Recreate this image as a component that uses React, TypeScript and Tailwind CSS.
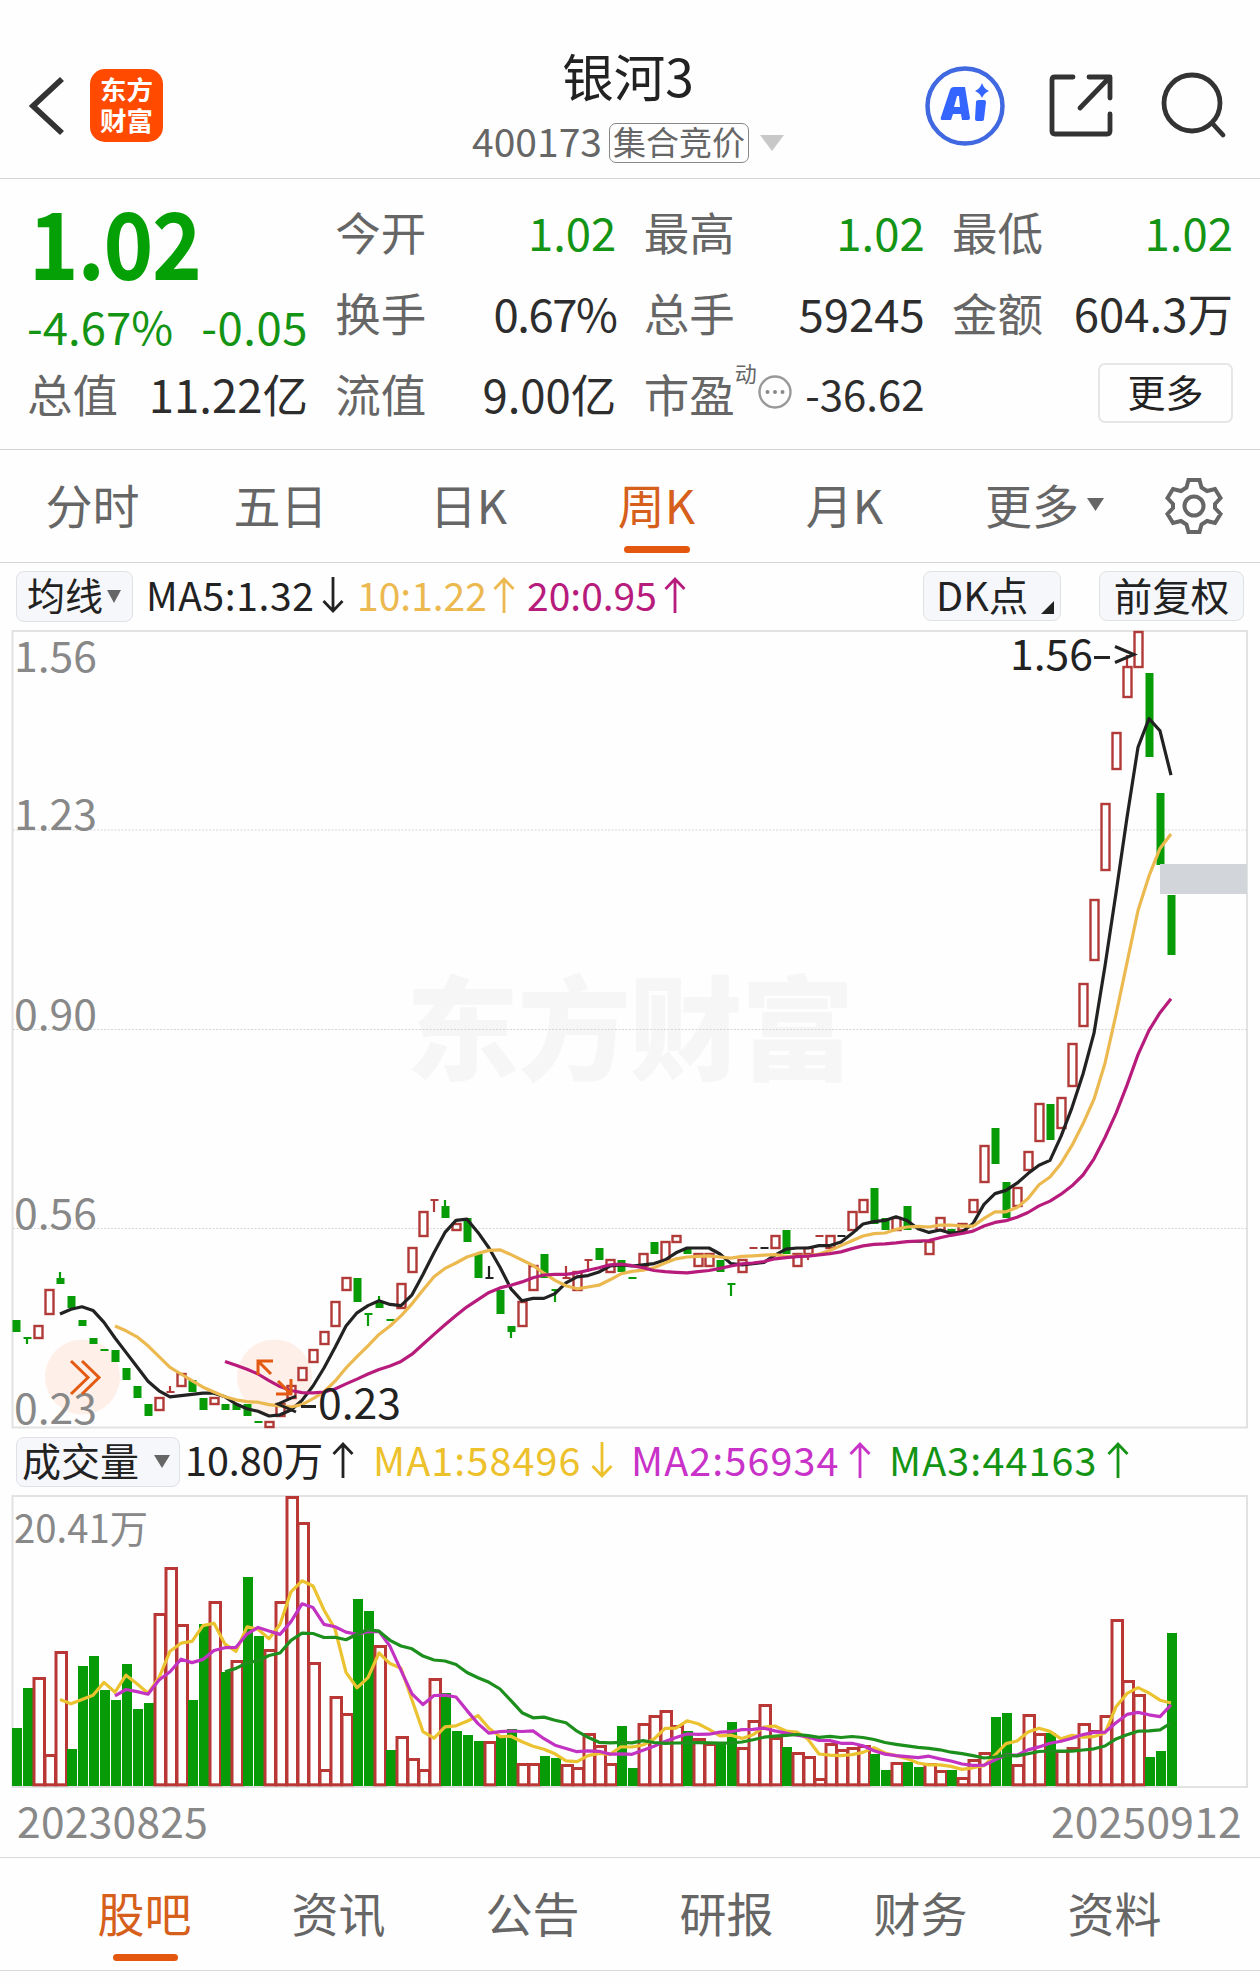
import React from "react";

type Kind = "g" | "r" | "k";
/* [kind, body top, body bottom, wick top?, wick bottom?] in chart units */
type Candle = [Kind, number, number, number?, number?];

const RED = "#b13a38";
const GREEN = "#079c07";
const INK = "#222222";

const candles: Candle[] = [
  ["g", 1320, 1332], ["g", 1338, 1338, 1338, 1344], ["r", 1325, 1339], ["r", 1289, 1315], ["g", 1278, 1284, 1272, 1284],
  ["g", 1296, 1308], ["g", 1320, 1326], ["g", 1338, 1344], ["g", 1350, 1350], ["g", 1350, 1362],
  ["g", 1368, 1380], ["g", 1386, 1398], ["g", 1404, 1416], ["r", 1397, 1411], ["r", 1392, 1392, 1386, 1392],
  ["r", 1373, 1387], ["g", 1380, 1392], ["g", 1398, 1410], ["r", 1397, 1405], ["g", 1404, 1410],
  ["g", 1404, 1410], ["g", 1404, 1416], ["g", 1422, 1422], ["r", 1421, 1428], ["r", 1403, 1417],
  ["r", 1385, 1399], ["r", 1367, 1381], ["r", 1349, 1363], ["r", 1331, 1345], ["r", 1301, 1327],
  ["r", 1277, 1291], ["g", 1278, 1302], ["g", 1314, 1314, 1314, 1326], ["g", 1302, 1308, 1296, 1308], ["g", 1320, 1320],
  ["r", 1283, 1309], ["r", 1247, 1273], ["r", 1211, 1237], ["r", 1200, 1200, 1200, 1212], ["g", 1206, 1218, 1200, 1218],
  ["r", 1223, 1231], ["g", 1218, 1242], ["g", 1254, 1278], ["k", 1278, 1278, 1266, 1278], ["g", 1290, 1314],
  ["g", 1326, 1332, 1326, 1338], ["r", 1301, 1327], ["r", 1265, 1291], ["g", 1254, 1278], ["g", 1290, 1290, 1290, 1302],
  ["r", 1278, 1278, 1266, 1278], ["r", 1271, 1291], ["r", 1260, 1260, 1260, 1272], ["g", 1248, 1260], ["r", 1259, 1273],
  ["g", 1260, 1272], ["g", 1278, 1278], ["r", 1253, 1267], ["g", 1242, 1254], ["r", 1241, 1261],
  ["r", 1235, 1243], ["g", 1248, 1254], ["r", 1253, 1267], ["r", 1253, 1267], ["g", 1260, 1272],
  ["g", 1284, 1284, 1284, 1296], ["r", 1259, 1273], ["r", 1248, 1248], ["k", 1248, 1248], ["r", 1235, 1249],
  ["g", 1230, 1254], ["r", 1253, 1267], ["r", 1247, 1255, 1247, 1260], ["r", 1236, 1236], ["r", 1235, 1249],
  ["k", 1236, 1236], ["r", 1211, 1231], ["r", 1199, 1213], ["g", 1188, 1224], ["g", 1218, 1230],
  ["r", 1217, 1231], ["g", 1206, 1230], ["g", 1242, 1242], ["r", 1241, 1255], ["r", 1217, 1231],
  ["g", 1229, 1234], ["r", 1223, 1231], ["r", 1199, 1213], ["r", 1145, 1183], ["g", 1128, 1164],
  ["g", 1182, 1218], ["r", 1187, 1207], ["r", 1151, 1171], ["r", 1103, 1142], ["g", 1104, 1140],
  ["r", 1097, 1129], ["r", 1043, 1087], ["r", 983, 1027], ["r", 899, 961], ["r", 803, 871],
  ["r", 732, 770], ["r", 666, 698, 655, 666], ["r", 631, 668], ["g", 673, 757], ["g", 793, 865],
  ["g", 895, 955],
];

const volumeTops: number[] = [
  1728, 1688, 1677, 1754, 1651, 1749, 1666, 1656, 1690, 1700, 1664, 1709, 1703, 1613, 1567, 1624, 1700, 1624, 1601, 1672,
  1660, 1577, 1636, 1649, 1601, 1496, 1522, 1662, 1769, 1696, 1713, 1599, 1611, 1645, 1750, 1736, 1758, 1769, 1678, 1693,
  1731, 1735, 1741, 1741, 1735, 1729, 1763, 1763, 1756, 1758, 1764, 1767, 1733, 1745, 1763, 1726, 1768, 1723, 1715, 1710,
  1725, 1731, 1738, 1743, 1742, 1722, 1747, 1720, 1704, 1737, 1747, 1752, 1756, 1778, 1743, 1749, 1747, 1745, 1754, 1770,
  1762, 1762, 1767, 1763, 1770, 1770, 1777, 1759, 1752, 1717, 1713, 1764, 1714, 1733, 1733, 1750, 1747, 1723, 1730, 1715,
  1619, 1680, 1694, 1757, 1751, 1633,
];
const volumeKinds =
  "ggrrrggggggggrrrggrgrggrrrrrrrrggrgrrrrggggrggrrggrrrrrggrrrrgrrggrrrrgrrrrrrrggrggrrgrrrggrrrgrrrrrrrrggg";

const cx = (i: number) => 16.5 + 11 * i;

function average(values: number[], n: number) {
  const pts: string[] = [];
  for (let i = n - 1; i < values.length; i++) {
    let s = 0;
    for (let j = i - n + 1; j <= i; j++) s += values[j];
    pts.push(`${cx(i) - 0.5},${(s / n).toFixed(1)}`);
  }
  return pts.join(" ");
}

const closes = candles.map(([k, t, b]) => (k === "r" && b - t > 1 ? t + 1 : b));

function Line({ values, n, color }: { values: number[]; n: number; color: string }) {
  return <polyline points={average(values, n)} fill="none" stroke={color} strokeWidth={3.2} strokeLinejoin="round" />;
}

function CandleMark({ c, i }: { c: Candle; i: number }) {
  const [k, t, b, wt, wb] = c;
  const color = k === "r" ? RED : k === "g" ? GREEN : INK;
  const x = cx(i);
  return (
    <g>
      {wt !== undefined && wb !== undefined && <line x1={x - 0.5} x2={x - 0.5} y1={wt} y2={wb} stroke={color} strokeWidth={2.2} />}
      {t === b ? (
        <rect x={x - 4} y={t - 1} width={8} height={2} fill={color} />
      ) : k === "r" ? (
        <rect x={x - 4} y={t + 1} width={8} height={b - t - 2} fill="#fff" stroke={color} strokeWidth={2.4} />
      ) : (
        <rect x={x - 4} y={t} width={8} height={b - t} fill={color} />
      )}
    </g>
  );
}

function ChartText({ x, y, w, size = 42, color = "#888", children }: { x: number; y: number; w: number; size?: number; color?: string; children: string }) {
  return (
    <text x={x} y={y + size * 0.367} fontSize={size} textLength={w} lengthAdjust="spacingAndGlyphs" fill={color}>
      {children}
    </text>
  );
}

function PriceChart() {
  return (
    <svg className="block" width={1260} height={808} viewBox="0 624 1260 808">
      <text x={406} y={1071} fontSize={113} fontWeight={900} textLength={448} fill="#f6f6f6">东方财富</text>
      <rect x={12.5} y={631} width={1234.5} height={796.5} fill="none" stroke="#e2e2e2" strokeWidth={2} />
      {[830, 1029.5, 1228.5].map((y) => (
        <line key={y} x1={13} x2={1247} y1={y} y2={y} stroke="#d6d6d6" strokeWidth={1} strokeDasharray="2 1.5" />
      ))}
      <circle cx={82.5} cy={1377} r={37.5} fill="#feefe8" />
      <circle cx={274.5} cy={1377} r={37.5} fill="#feefe8" />
      <ChartText x={14} y={657} w={83}>1.56</ChartText>
      <ChartText x={14} y={815} w={83}>1.23</ChartText>
      <ChartText x={14} y={1014.5} w={83}>0.90</ChartText>
      <ChartText x={14} y={1213.5} w={83}>0.56</ChartText>
      <ChartText x={14} y={1408.5} w={83}>0.23</ChartText>
      {candles.map((c, i) => (
        <CandleMark key={i} c={c} i={i} />
      ))}
      <rect x={1160} y={864} width={87} height={30} fill="#d2d5da" />
      <Line values={closes} n={5} color={INK} />
      <Line values={closes} n={10} color="#ecb950" />
      <Line values={closes} n={20} color="#b71c7c" />
      <g fill="none" stroke="#e35a10" strokeWidth={3}>
        <path d="M71 1361 88 1377.500 71 1394M82 1361 99 1377.500 82 1394" />
        <path d="M273 1361H258V1375M258 1361 271 1374M276 1394H291V1379M291 1394 278 1381" />
      </g>
      <ChartText x={1010} y={654.5} w={83} color={INK}>1.56</ChartText>
      <ChartText x={318} y={1404} w={83} color={INK}>0.23</ChartText>
      <g fill="none" stroke={INK} strokeWidth={3}>
        <path d="M1094 657.500H1110M1115 646.500 1134 654.500 1115 662.500" />
        <path d="M301 1406.500H316M296 1396 278 1404 296 1412" />
      </g>
    </svg>
  );
}

function VolumeChart() {
  return (
    <svg className="block" width={1260} height={300} viewBox="0 1490 1260 300">
      <rect x={12.5} y={1496} width={1234.5} height={291} fill="none" stroke="#e2e2e2" strokeWidth={2} />
      <ChartText x={14} y={1529} w={134} size={39}>20.41万</ChartText>
      {volumeTops.map((t, i) =>
        volumeKinds[i] === "g" ? (
          <rect key={i} x={cx(i) - 4.5} y={t} width={10} height={1786 - t} fill={GREEN} />
        ) : (
          <rect key={i} x={cx(i) - 4.5} y={t + 1.5} width={10.500} height={Math.max(1784.8 - t - 1.5, 1)} fill="#fff" stroke="#b93836" strokeWidth={3} />
        )
      )}
      <Line values={volumeTops} n={5} color="#ebc22f" />
      <Line values={volumeTops} n={10} color="#c233c2" />
      <Line values={volumeTops} n={20} color="#1d8f1d" />
    </svg>
  );
}

function Arrow({ up, className }: { up?: boolean; className: string }) {
  return (
    <svg className={`shrink-0 ${className}`} width={22} height={36} viewBox="0 0 22 36" fill="none" stroke="currentColor" strokeWidth={2.8}>
      {up ? <path d="M11 36V2M1.500 12 11 2 20.500 12" /> : <path d="M11 0V34M1.500 24 11 34 20.500 24" />}
    </svg>
  );
}

function Caret({ w, h, className = "" }: { w: number; h: number; className?: string }) {
  return (
    <svg className={`shrink-0 ${className}`} width={w} height={h} viewBox="0 0 10 10" preserveAspectRatio="none" fill="currentColor">
      <path d="M0 0H10L5 10Z" />
    </svg>
  );
}

function Stat({ label, value, green, tight }: { label: string; value: string; green?: boolean; tight?: boolean }) {
  return (
    <div className="flex h-[81px] items-center justify-between">
      <span className="text-[#666]">{label}</span>
      <span className={`${green ? "text-[#149414]" : "text-[#2d2d2d]"} ${tight ? "tracking-[-1.500px]" : ""}`}>{value}</span>
    </div>
  );
}

function Header() {
  return (
    <header className="flex h-[179px] items-start justify-between border-b border-[#d5d5d5]">
      <div className="flex w-[336px] items-start pt-[69px]">
        <svg className="ml-[28px] mt-[7px]" width={36} height={60} viewBox="0 0 36 60" fill="none" stroke="#333" strokeWidth={5.800}>
          <path d="M34 3 5 30 34 57" />
        </svg>
        <div className="ml-[26px] flex h-[73px] w-[73px] flex-col items-center justify-center rounded-[15px] bg-[#ff4a00] pb-[4px] text-[26.500px] leading-[31px] font-bold text-white">
          <span>东方</span>
          <span>财富</span>
        </div>
      </div>
      <div className="flex flex-col items-center pt-[45px]">
        <h1 className="h-[60px] text-[51.500px] leading-[60px] text-[#222]">银河3</h1>
        <div className="mt-[17px] flex h-[41px] items-center text-[#666]">
          <span className="-mt-[6px] text-[39px] leading-[40px]">400173</span>
          <span className="ml-[7px] flex h-[40px] w-[140px] items-center justify-center rounded-[7px] border border-[#888] pb-[4px] text-[33px] leading-[34px] whitespace-nowrap">集合竞价</span>
          <Caret w={24} h={16} className="ml-[11px] text-[#c8c8c8]" />
        </div>
      </div>
      <div className="flex w-[340px] items-start pt-[65px]">
        <svg className="ml-[4px]" width={82} height={82} viewBox="0 0 82 82">
          <circle cx={41} cy={41} r={37.500} fill="none" stroke="#4068e0" strokeWidth={4.500} />
          <path d="M30 22H41L46 53Q46 55 44 55H38L37 49H29L27 55H18Q16 55 17 52L26 25Q27 22 30 22ZM33 31 30 42H36L35 31ZM55 35H60Q62 35 62 37L60 54Q60 56 57 56H53Q51 56 51 54L52 37Q52 35 55 35Z" fill="#3466ff" fillRule="evenodd" />
          <path d="M58 18Q60 24 65 26Q60 28 58 33Q56 28 51 26Q56 24 58 18Z" fill="#3466ff" />
        </svg>
        <svg className="ml-[43px] mt-[9px]" width={66} height={66} viewBox="0 0 66 66" fill="none" stroke="#333" strokeWidth={4.800} strokeLinecap="round" strokeLinejoin="round">
          <path d="M24 3H6Q3 3 3 6V57Q3 60 6 60H58Q61 60 61 57V40M40 3H61V24M60 4 31 34" />
        </svg>
        <svg className="ml-[46px] mt-[6px]" width={70} height={70} viewBox="0 0 70 70" fill="none" stroke="#333" strokeWidth={4.800} strokeLinecap="round">
          <circle cx={31} cy={32} r={28} />
          <path d="M51 52 62 64" />
        </svg>
      </div>
    </header>
  );
}

function Quote() {
  return (
    <section className="flex h-[271px] justify-between border-b border-[#d5d5d5] pt-[11px] pr-[27px] pl-[27px] text-[45.500px] leading-[60px] whitespace-nowrap">
      <div className="flex w-[281px] flex-col">
        <div className="flex h-[100px] w-fit origin-left scale-x-[0.910] items-center pl-[2px] text-[93px] leading-[100px] font-bold tracking-[-1.500px] text-[#05a005]">1.02</div>
        <div className="flex h-[70px] items-center justify-between text-[#149414]">
          <span>-4.67%</span>
          <span className="tracking-[0.500px]">-0.05</span>
        </div>
        <div className="flex h-[66px] items-center justify-between">
          <span className="text-[#666]">总值</span>
          <span className="text-[#2d2d2d]">11.22亿</span>
        </div>
      </div>
      <div className="w-[281px]">
        <Stat label="今开" value="1.02" green />
        <Stat label="换手" value="0.67%" tight />
        <Stat label="流值" value="9.00亿" />
      </div>
      <div className="w-[281px]">
        <Stat label="最高" value="1.02" green />
        <Stat label="总手" value="59245" />
        <div className="flex h-[81px] items-center">
          <span className="text-[#666]">市盈</span>
          <span className="-mt-[41px] text-[22px] text-[#666]">动</span>
          <svg className="-mt-[2px] ml-[1px]" width={34} height={34} viewBox="0 0 34 34" fill="#888">
            <circle cx={17} cy={17} r={15.500} fill="none" stroke="#999" strokeWidth={2.400} />
            <circle cx={9.500} cy={17} r={2} />
            <circle cx={17} cy={17} r={2} />
            <circle cx={24.500} cy={17} r={2} />
          </svg>
          <span className="ml-auto text-[42px] text-[#2d2d2d]">-36.62</span>
        </div>
      </div>
      <div className="w-[281px]">
        <Stat label="最低" value="1.02" green />
        <Stat label="金额" value="604.3万" />
        <div className="flex h-[81px] items-center justify-end">
          <button className="flex h-[60px] w-[135px] items-center justify-center rounded-[7px] border-2 border-[#e6e6e6] pb-[4px] text-[38px] text-[#222]">更多</button>
        </div>
      </div>
    </section>
  );
}

function PeriodTabs() {
  return (
    <nav className="flex h-[113px] items-center border-b border-[#d5d5d5] text-[47px] leading-[60px] whitespace-nowrap text-[#666]">
      {["分时", "五日", "日K", "周K", "月K"].map((t) => (
        <div key={t} className={`relative flex h-full w-[188px] items-center justify-center pr-[3px] pb-[4px] ${t === "周K" ? "text-[#d65f1b]" : ""}`}>
          {t}
          {t === "周K" && <span className="absolute bottom-[9px] left-[60px] h-[7px] w-[66px] rounded-full bg-[#e4570e]" />}
        </div>
      ))}
      <div className="ml-[45px] flex items-center pb-[4px]">
        更多
        <Caret w={17} h={13} className="ml-[8px]" />
      </div>
      <svg className="ml-auto mr-[36px] mb-[1px]" width={60} height={60} viewBox="0 0 60 60" fill="none" stroke="#666" strokeWidth={4}>
        <path d="M24.500 4H35.500L37.500 11.500L43 15L51 13L56.500 22L51 28V32L56.500 38L51 47L43 45L37.500 48.500L35.500 56H24.500L22.500 48.500L17 45L9 47L3.500 38L9 32V28L3.500 22L9 13L17 15L22.500 11.500Z" />
        <circle cx={30} cy={30} r={9.500} />
      </svg>
    </nav>
  );
}

function MaBar() {
  return (
    <div className="flex h-[61px] items-start pt-[8px] text-[39px] leading-[46px] whitespace-nowrap text-[#222]">
      <button className="ml-[16px] flex h-[51px] w-[117px] shrink-0 items-center rounded-[8px] border border-[#dfe1e5] bg-[#f6f7fa] pb-[5px] pl-[10px] text-[38px]">
        均线
        <Caret w={14} h={13} className="mt-[5px] ml-[4px] text-[#666]" />
      </button>
      <span className="ml-[13px] w-[178px] tracking-[0.600px]">MA5:1.32</span>
      <Arrow className="mt-[6px] -ml-[2px]" />
      <span className="ml-[13px] w-[126px] text-[#ecb950]">10:1.22</span>
      <Arrow up className="mt-[6px] ml-[10px] text-[#ecb950]" />
      <span className="ml-[12px] w-[128px] text-[#b71c7c]">20:0.95</span>
      <Arrow up className="mt-[6px] ml-[9px] text-[#b71c7c]" />
      <button className="relative ml-auto flex h-[50px] w-[138px] items-center rounded-[8px] border border-[#dfe1e5] bg-[#f6f7fa] pb-[5px] pl-[12px] text-[39.500px]">
        DK点
        <svg className="absolute right-[6px] bottom-[6px]" width={13} height={13} viewBox="0 0 10 10">
          <path d="M10 0V10H0Z" fill="#222" />
        </svg>
      </button>
      <button className="mr-[16px] ml-[38px] flex h-[50px] w-[145px] items-center justify-center rounded-[8px] border border-[#dfe1e5] bg-[#f6f7fa] pb-[5px] text-[38.500px]">前复权</button>
    </div>
  );
}

function VolumeBar() {
  return (
    <div className="flex h-[58px] items-start pt-[5px] text-[39.500px] leading-[43px] whitespace-nowrap text-[#222]">
      <button className="ml-[16px] flex h-[50px] w-[164px] shrink-0 items-center rounded-[8px] border border-[#dfe1e5] bg-[#f6f7fa] pb-[6px] pl-[5px] text-[39px]">
        成交量
        <Caret w={16} h={13} className="mt-[5px] ml-[15px] text-[#666]" />
      </button>
      <span className="ml-[5px] w-[140px]">10.80万</span>
      <Arrow up className="mt-[5px] ml-[7px]" />
      <span className="ml-[19px] w-[212px] tracking-[1.100px] text-[#ecc12c]">MA1:58496</span>
      <Arrow className="mt-[5px] ml-[6px] text-[#ecc12c]" />
      <span className="ml-[18px] w-[212px] tracking-[1.100px] text-[#c832c8]">MA2:56934</span>
      <Arrow up className="mt-[5px] ml-[6px] text-[#c832c8]" />
      <span className="ml-[18px] w-[212px] tracking-[1.100px] text-[#149414]">MA3:44163</span>
      <Arrow up className="mt-[5px] ml-[6px] text-[#149414]" />
    </div>
  );
}

export default function App() {
  return (
    <main className="h-[1983px] w-[1260px] overflow-hidden bg-[#fefefe] font-['Noto_Sans_CJK_SC',sans-serif]">
      <Header />
      <Quote />
      <PeriodTabs />
      <MaBar />
      <PriceChart />
      <VolumeBar />
      <VolumeChart />
      <div className="flex h-[68px] items-center justify-between border-b border-[#d5d9d9] pr-[18px] pb-[7px] pl-[17px] text-[42.500px] leading-[60px] tracking-[0.300px] text-[#888]">
        <span>20230825</span>
        <span>20250912</span>
      </div>
      <nav className="grid h-[113px] grid-cols-6 border-b border-[#d5d9d9] px-[48px] text-[47px] leading-[60px] text-[#666]">
        {["股吧", "资讯", "公告", "研报", "财务", "资料"].map((t, i) => (
          <div key={t} className={`relative flex items-center justify-center pr-[1px] pb-[4px] ${i === 0 ? "text-[#d65f1b]" : ""}`}>
            {t}
            {i === 0 && <span className="absolute bottom-[9px] left-[65px] h-[7px] w-[65px] rounded-full bg-[#e4570e]" />}
          </div>
        ))}
      </nav>
    </main>
  );
}
